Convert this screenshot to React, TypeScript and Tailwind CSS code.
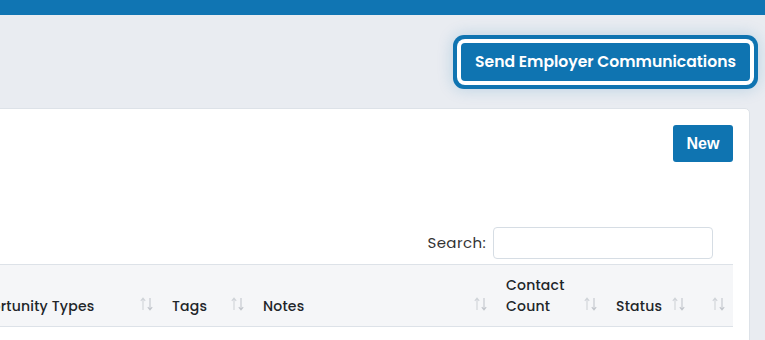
import type { ReactNode } from "react";

const columns: { label: ReactNode; width?: string }[] = [
  { label: "Opportunity Types" },
  { label: "Tags", width: "w-[91px]" },
  { label: "Notes", width: "w-[243px]" },
  { label: "Contact Count", width: "w-[110px]" },
  { label: "Status", width: "w-[88px]" },
  { label: "", width: "w-[39px]" },
];

function SortIcon() {
  return (
    <svg width="13" height="14" viewBox="0 0 13 14" className="mb-[6px] shrink-0" fill="none">
      {/* up arrow */}
      <path d="M3 13V1.5M0.8 3.8L3 1.2L5.2 3.8" stroke="#cfd3d8" strokeWidth="1.1" />
      {/* down arrow */}
      <path d="M10 1V12.5M7.8 10.2L10 12.8L12.2 10.2" stroke="#c2c6cc" strokeWidth="1.1" />
    </svg>
  );
}

export default function App() {
  return (
    <div className="w-[765px] h-[340px] overflow-hidden bg-[#e9ecf1] font-['Poppins','Inter',sans-serif] text-[#212529]">
      {/* Top bar */}
      <div className="h-[15px] bg-[#1075b3]" />

      {/* Actions */}
      <div className="flex justify-end pr-[15px] pt-[28px]">
        <button className="h-[38px] w-[289px] rounded-[4px] bg-[#0f74b1] text-[15.6px] font-semibold text-white shadow-[0_0_0_4px_#ffffff,0_0_0_8px_#0f74b1,0_0_16px_8px_rgba(15,116,177,0.22)]">
          Send Employer Communications
        </button>
      </div>

      {/* Card */}
      <div className="mt-[27px] ml-[-66px] mr-[15px] rounded-[5px] border border-[#dde2e8] bg-white px-4 pt-4 pb-10">
        <div className="flex justify-end">
          <button className="h-[37px] w-[60px] rounded-[3px] bg-[#0f74b1] font-['Liberation_Sans',Arial,sans-serif] text-[16px] font-bold text-white">
            New
          </button>
        </div>

        <div className="mt-[65px] mr-[20px] flex items-center justify-end gap-[7px]">
          <label className="text-[15px] tracking-[0.4px] text-[#333]">Search:</label>
          <input className="h-[32px] w-[220px] rounded-[4px] border border-[#d6dde4] bg-white outline-none" />
        </div>

        {/* Table header */}
        <div className="mt-[5px] flex h-[63px] border-y border-[#dde2e8] bg-[#f5f6f8]">
          {columns.map((c, i) => (
            <div
              key={i}
              className={`flex items-end justify-between gap-2 pl-[10px] pr-[9px] pb-[9px] ${c.width ?? "flex-1"}`}
            >
              <span className="text-[14px] font-medium leading-[21px] tracking-[0.2px] text-[#212529]">{c.label}</span>
              <SortIcon />
            </div>
          ))}
        </div>
        <div className="h-[40px]" />
      </div>
    </div>
  );
}
